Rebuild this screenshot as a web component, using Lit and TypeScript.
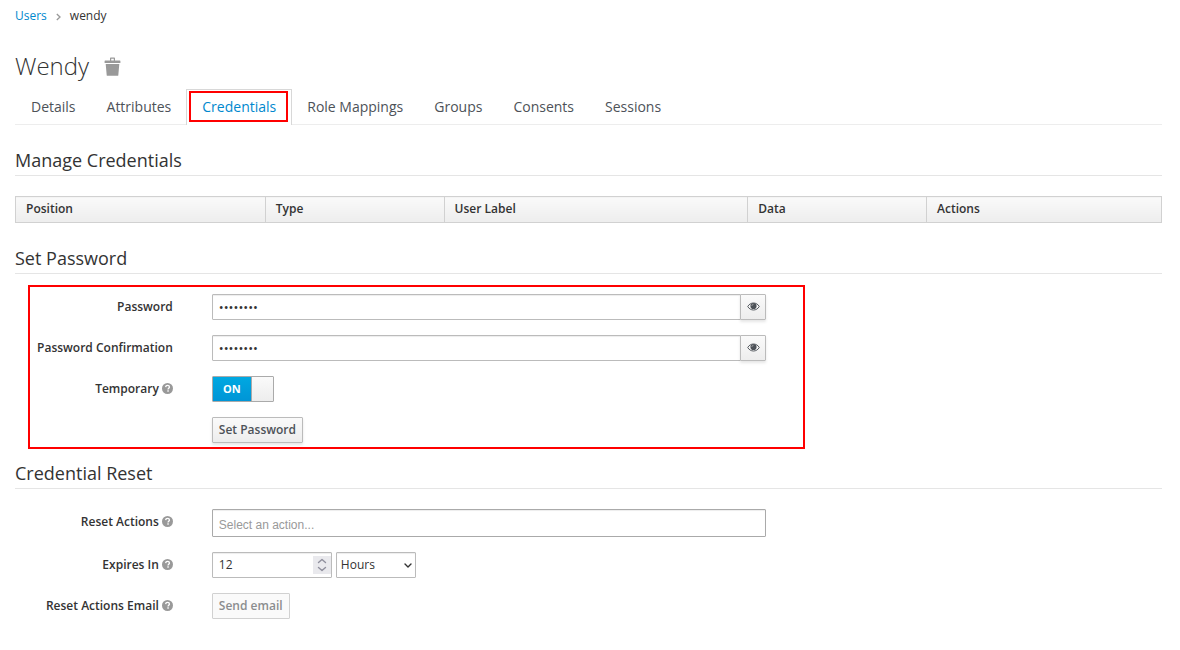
import { LitElement, html, css } from "lit";
import { customElement, state } from "lit/decorators.js";
import { classMap } from "lit/directives/class-map.js";

const TABS = ["Details", "Attributes", "Credentials", "Role Mappings", "Groups", "Consents", "Sessions"];
const COLUMNS = ["Position", "Type", "User Label", "Data", "Actions"];

const helpIcon = html`<svg class="help" viewBox="0 0 20 20" aria-hidden="true">
  <circle cx="10" cy="10" r="10" fill="#999" />
  <path d="M6.6 7.6c.2-2 1.600-3.200 3.500-3.200 2 0 3.400 1.200 3.400 2.900 0 2.300-2.500 2.300-2.500 4.300" fill="none" stroke="#fff" stroke-width="2.400" />
  <rect x="9.700" y="13.200" width="2.600" height="2.600" fill="#fff" />
</svg>`;

const eyeIcon = html`<svg class="eye" viewBox="0 0 26 18" aria-hidden="true">
  <path d="M1.500 9C4 4.600 8 2 13 2s9 2.600 11.500 7C22 13.400 18 16 13 16S4 13.400 1.500 9Z" fill="#f7f7f7" stroke="#4d5258" stroke-width="1.900" />
  <circle cx="13" cy="8" r="6.200" fill="#4d5258" />
  <path d="M9.600 8A3.400 3.400 0 0 1 13 4.600" fill="none" stroke="#c8c8c8" stroke-width="1.200" />
</svg>`;

@customElement("app-root")
export class AppRoot extends LitElement {
  static styles = css`
    :host {
      display: block;
      box-sizing: border-box;
      min-height: 100vh;
      padding: 6px 18px 30px 15px;
      background: #fff;
      color: #333;
      font: 12px/20px "Open Sans", "Noto Sans", sans-serif;
    }
    *, *::before, *::after { box-sizing: border-box; }
    button, input, select { font: inherit; color: inherit; margin: 0; border-radius: 1px; }
    .crumbs { display: flex; align-items: center; list-style: none; margin: 0; padding: 0; }
    .crumbs a { color: #0088ce; text-decoration: none; font-weight: 500; }
    .crumb-sep { width: 5px; height: 8px; margin: 1px 9px 0; display: block; }
    .title { display: flex; align-items: center; gap: 15px; margin: 25px 0 8px; }
    .title h1 { margin: 0; font-size: 24px; line-height: 30px; font-weight: 300; }
    .trash { border: 0; padding: 1px 0 0; background: none; display: flex; cursor: pointer; }
    .trash svg { width: 17px; height: 19px; }

    .tabs { display: flex; list-style: none; margin: 0 0 20px; padding: 0; border-bottom: 1px solid #ededed; }
    .tab { position: relative; margin: 0 -1px -1px 0; border: 1px solid transparent; border-bottom: 0; }
    .tab a { display: block; padding: 6px 15px 8px; font-size: 14px; line-height: 21px; color: #4d5258; text-decoration: none; }
    .tab.active { background: #fff; border-color: #d8d8d8; }
    .tab.active a { color: #0088ce; font-weight: 500; }
    .mark { position: absolute; border: 2px solid #f00; pointer-events: none; }
    .tab .mark { inset: 1px 3px 3px 2px; }

    h2 { margin: 0 0 20px; font-size: 18px; line-height: 30px; font-weight: 400; border-bottom: 1px solid #e5e5e5; }
    .creds { width: 100%; table-layout: fixed; border-collapse: collapse; margin-bottom: 20px; }
    .creds th {
      padding: 2px 10px 3px; text-align: left; font-weight: 600; border: 1px solid #d1d1d1;
      background: linear-gradient(#fafafa, #ededed);
    }
    .c0 { width: 21.8%; } .c1 { width: 15.6%; } .c2 { width: 26.5%; } .c3 { width: 15.6%; }

    .form { position: relative; display: grid; gap: 15px; margin-bottom: 15px; }
    .form > .mark { top: -9px; bottom: -6px; left: 13px; right: calc(100% / 3 - 25px); }
    .row { display: grid; grid-template-columns: 2fr 6fr 4fr; margin: 0 -20px; }
    .name { display: flex; justify-content: flex-end; align-items: center; gap: 3px; height: 26px; padding: 0 20px 1px 0; font-weight: 600; white-space: nowrap; }
    .help { width: 11px; height: 11px; }
    .control { display: flex; gap: 4px; padding: 0 20px 0 19px; min-width: 0; }
    .field { height: 26px; padding: 2px 6px; border: 1px solid #bbb; background: #fff; box-shadow: inset 0 1px 1px rgba(3, 3, 3, .075); outline: none; }
    .grow { flex: 1; min-width: 0; }
    .joined { display: flex; flex: 1; min-width: 0; }
    .joined .field { font-size: 13px; }
    .joined .btn { width: 26px; margin-left: -1px; padding: 0 0 1px; display: flex; align-items: center; justify-content: center; }
    .eye { width: 13px; height: 9px; }
    .btn {
      height: 26px; padding: 0 6px 1px; border: 1px solid #bbb; color: #4d5258; font-weight: 600;
      background: linear-gradient(#fafafa, #ededed); box-shadow: 0 2px 3px rgba(3, 3, 3, .1); cursor: pointer;
    }
    .btn:disabled { background: #fafafa; border-color: #d1d1d1; color: #8b8d8f; box-shadow: none; cursor: default; }
    .switch { position: relative; display: flex; width: 62px; height: 26px; border: 1px solid #aaa; border-radius: 1px; background: linear-gradient(#fafafa, #ededed); }
    .switch input { position: absolute; inset: 0; width: 100%; height: 100%; opacity: 0; cursor: pointer; }
    .switch span { width: 39px; border-right: 1px solid #aaa; background: linear-gradient(#00a8e1, #0095d6); color: #fff; font-size: 11px; line-height: 24px; font-weight: 700; text-align: center; }
    .switch.off span { background: none; color: #333; }
    .picker { height: 28px; padding: 4px 6px 1px; border-color: #aaa; font-family: "Liberation Sans", Arial, sans-serif; }
    .picker::placeholder { color: #999; opacity: 1; }
    .wrap { position: relative; display: flex; }
    .amount { width: 120px; padding: 1px 6px 3px; appearance: textfield; -moz-appearance: textfield; }
    .amount::-webkit-inner-spin-button, .amount::-webkit-outer-spin-button { appearance: none; -webkit-appearance: none; margin: 0; }
    .spin { position: absolute; right: 1px; top: 4px; width: 18px; height: 18px; background: #e9e9ed; pointer-events: none; }
    .unit { width: 80px; padding: 0 4px 1px; appearance: none; -webkit-appearance: none; }
    .chev { position: absolute; right: 4px; top: 10px; width: 8px; height: 7px; pointer-events: none; }
  `;

  @state() private active = "Credentials";
  @state() private temporary = true;
  @state() private shown: Record<string, boolean> = {};

  private passwordRow(id: string, label: string) {
    return html`<div class="row">
      <label class="name" for=${id}>${label}</label>
      <div class="control"><div class="joined">
        <input class="field grow" id=${id} type=${this.shown[id] ? "text" : "password"} value="password" />
        <button class="btn" type="button" aria-label="Toggle visibility"
          @click=${() => (this.shown = { ...this.shown, [id]: !this.shown[id] })}>${eyeIcon}</button>
      </div></div>
    </div>`;
  }

  render() {
    return html`
      <ol class="crumbs">
        <li><a href="#users">Users</a></li>
        <li><svg class="crumb-sep" viewBox="0 0 5 8" aria-hidden="true"><path d="M.8 1 4 4 .8 7" fill="none" stroke="#999" stroke-width="1.300" /></svg></li>
        <li>wendy</li>
      </ol>
      <div class="title">
        <h1>Wendy</h1>
        <button class="trash" type="button" aria-label="Delete user">
          <svg viewBox="0 0 17 19" fill="#999"><path d="M1 3.500h5V1.200Q6 .5 6.700.5h3.600q.7 0 .7.700v2.300h5q.4 0 .4.400V6H.600V3.900q0-.4.400-.4ZM7.200 1.800v1.700h2.600V1.800Z" fill-rule="evenodd" /><path d="M1.700 7h13.600L14.300 18.200q0 .5-.6.500H3.300q-.6 0-.6-.5Z" /></svg>
        </button>
      </div>
      <ul class="tabs">
        ${TABS.map((t) => html`<li class=${classMap({ tab: true, active: t === this.active })}>
          <a href="#tab" @click=${() => (this.active = t)}>${t}</a>
          ${t === "Credentials" ? html`<span class="mark"></span>` : null}
        </li>`)}
      </ul>

      <h2>Manage Credentials</h2>
      <table class="creds">
        <thead><tr>${COLUMNS.map((c, i) => html`<th class="c${i}" scope="col">${c}</th>`)}</tr></thead>
      </table>

      <h2>Set Password</h2>
      <div class="form">
        ${this.passwordRow("password", "Password")}
        ${this.passwordRow("confirm", "Password Confirmation")}
        <div class="row">
          <label class="name" for="temporary">Temporary ${helpIcon}</label>
          <div class="control"><div class=${classMap({ switch: true, off: !this.temporary })}>
            <span>${this.temporary ? "ON" : "OFF"}</span>
            <input id="temporary" type="checkbox" .checked=${this.temporary}
              @change=${(e: Event) => (this.temporary = (e.target as HTMLInputElement).checked)} />
          </div></div>
        </div>
        <div class="row"><span></span><div class="control"><button class="btn" type="button">Set Password</button></div></div>
        <div class="mark"></div>
      </div>

      <h2>Credential Reset</h2>
      <div class="form">
        <div class="row">
          <label class="name" for="actions">Reset Actions ${helpIcon}</label>
          <div class="control"><input class="field picker grow" id="actions" type="text" placeholder="Select an action..." /></div>
        </div>
        <div class="row">
          <label class="name" for="expires">Expires In ${helpIcon}</label>
          <div class="control">
            <div class="wrap">
              <input class="field amount" id="expires" type="number" value="12" />
              <svg class="spin" viewBox="0 0 18 18" aria-hidden="true"><path d="M5.500 6.500 9 3.500l3.500 3M5.500 11.500l3.500 3 3.500-3" fill="none" stroke="#8f8f9d" stroke-width="1.400" stroke-linecap="round" stroke-linejoin="round" /></svg>
            </div>
            <div class="wrap">
              <select class="field unit" aria-label="Expiration unit">
                <option>Minutes</option><option selected>Hours</option><option>Days</option>
              </select>
              <svg class="chev" viewBox="0 0 8 7" aria-hidden="true"><path d="M1 2l3 3 3-3" fill="none" stroke="#333" stroke-width="1.400" stroke-linecap="round" stroke-linejoin="round" /></svg>
            </div>
          </div>
        </div>
        <div class="row">
          <label class="name" for="send">Reset Actions Email ${helpIcon}</label>
          <div class="control"><button class="btn" id="send" type="button" disabled>Send email</button></div>
        </div>
      </div>
    `;
  }
}
